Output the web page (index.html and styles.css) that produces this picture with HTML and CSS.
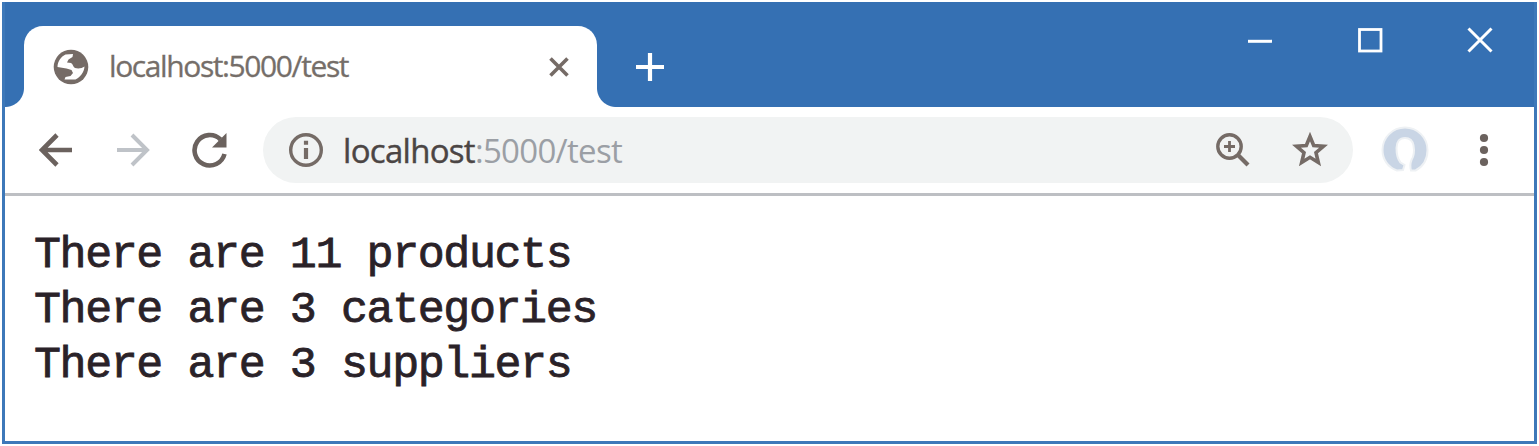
FILE: index.html
```html
<!DOCTYPE html>
<html lang="en">
<head>
<meta charset="utf-8">
<title>localhost:5000/test</title>
<link rel="stylesheet" href="styles.css">
</head>
<body>
<div class="window">
  <header class="titlebar">
    <span class="flare flare-left"></span>
    <div class="tab">
      <svg class="favicon" width="36" height="36" viewBox="0 0 36 36"><circle cx="18" cy="18" r="17.3" fill="#756b66"/><path d="M12.500 5.500L20 5l-.5 3-4 2.500-1.500 3 4 .5c2 1 2 4 4 5 3 1 7 .5 9.500-1.500-.5 6-4 10.500-9 13h-11l1-2.500 5-1 2.500-3-1.500-3-5-1.500-9-1.500C4.500 12.500 8 7.500 12.500 5.500z" fill="#fff"/></svg>
      <span class="tab-title">localhost:5000/test</span>
      <svg class="tab-close" width="20" height="20" viewBox="0 0 20 20"><path d="M1.500 1.500l17 17M18.500 1.500l-17 17" stroke="#756b66" stroke-width="3.600" fill="none"/></svg>
    </div>
    <span class="flare flare-right"></span>
    <svg class="new-tab" width="30" height="30" viewBox="0 0 30 30"><path d="M15 1v28M1 15h28" stroke="#fff" stroke-width="4.200"/></svg>
    <div class="controls">
      <svg width="26" height="26" viewBox="0 0 26 26"><path d="M1 14.300h24" stroke="#fff" stroke-width="3"/></svg>
      <svg width="26" height="26" viewBox="0 0 26 26"><rect x="2.500" y="2.500" width="21.500" height="21.500" stroke="#fff" stroke-width="2.800" fill="none"/></svg>
      <svg width="26" height="26" viewBox="0 0 26 26"><path d="M1.500 1.500l23 23M24.500 1.500l-23 23" stroke="#fff" stroke-width="3"/></svg>
    </div>
  </header>
  <nav class="toolbar">
    <svg class="back" width="34" height="34" viewBox="0 0 34 34"><path d="M33 17H3M18 2L3 17l15 15" stroke="#6b625e" stroke-width="4.600" fill="none"/></svg>
    <svg class="forward" width="34" height="34" viewBox="0 0 34 34"><path d="M1 17h30M16 2l15 15-15 15" stroke="#bfc3c8" stroke-width="4" fill="none"/></svg>
    <svg class="reload" width="36" height="36" viewBox="0 0 36 36"><path d="M32.500 22A15.200 15.200 0 1 1 28.500 7.500" stroke="#6b625e" stroke-width="4.600" fill="none"/><path d="M34.500 1v14.500H20z" fill="#6b625e"/></svg>
    <div class="address">
      <svg class="info" width="36" height="36" viewBox="0 0 36 36"><circle cx="18" cy="18" r="15.300" stroke="#756b66" stroke-width="3.400" fill="none"/><path d="M18 16v11M18 8.800v4" stroke="#756b66" stroke-width="4.200"/></svg>
      <span class="url"><span class="host">localhost</span><span class="path">:5000/test</span></span>
      <svg class="zoom" width="34" height="34" viewBox="0 0 34 34"><circle cx="13.500" cy="13.500" r="11.700" stroke="#756b66" stroke-width="3.400" fill="none"/><path d="M22 22l10 10" stroke="#756b66" stroke-width="4.200"/><path d="M13.500 8v11M8 13.500h11" stroke="#756b66" stroke-width="2.800"/></svg>
      <svg class="star" width="36" height="36" viewBox="0 0 36 36"><path d="M18 4.500l3.700 9 9.800.8-7.500 6.400 2.300 9.800-8.300-5.200-8.300 5.200 2.300-9.800-7.500-6.400 9.800-.8z" stroke="#756b66" stroke-width="3.600" fill="none"/></svg>
    </div>
    <svg class="avatar" width="50" height="50" viewBox="0 0 50 50"><path d="M17 45.500C8 42.500 2.500 34.500 2.500 25a22.500 22.500 0 0 1 45 0c0 9-4.500 16.500-12 20.500h-4.500c-1-4-1-7 .5-10.500 2.500-4 3-9 2-14.500-1-5.500-4-7.500-8.500-7.500-5.500 0-8.500 4-8.500 10 0 6 1 11 4 14.500l4 2.500-1.500 5z" fill="#c9d5e5" stroke="#eef1f4" stroke-width="2"/></svg>
    <svg class="menu" width="10" height="34" viewBox="0 0 10 34"><g fill="#6b625e"><circle cx="5" cy="5" r="4.100"/><circle cx="5" cy="17" r="4.100"/><circle cx="5" cy="29" r="4.100"/></g></svg>
  </nav>
  <main class="page">
    <pre class="output">There are 11 products
There are 3 categories
There are 3 suppliers</pre>
  </main>
</div>
</body>
</html>
```
FILE: styles.css
```css
* { box-sizing: border-box; }
body { margin: 0; background: #fff; }
.window {
  width: 1535px;
  height: 442px;
  margin: 2px 0 0 2px;
  border: 3px solid #3d78b9;
  border-top-width: 0;
  background: #fff;
}
.titlebar {
  display: flex;
  height: 105px;
  padding-top: 24px;
  background: #3570b3;
}
.flare { width: 19px; height: 19px; align-self: flex-end; }
.flare-left { background: radial-gradient(circle at 0 0, transparent 18.5px, #fff 19.5px); }
.flare-right { background: radial-gradient(circle at 100% 0, transparent 18.5px, #fff 19.5px); }
.tab {
  display: flex;
  align-items: center;
  width: 573px;
  padding: 0 28px 0 29px;
  border-radius: 19px 19px 0 0;
  background: #fff;
}
.favicon { flex: none; }
.tab-title {
  margin: 0 0 2px 20px;
  font: 30px/40px "Open Sans", "Noto Sans", sans-serif;
  letter-spacing: -1.4px;
  color: #756e69;
  white-space: nowrap;
  -webkit-text-stroke: 0.3px #756e69;
}
.tab-close { margin-left: auto; }
.new-tab { margin: 26px 0 0 19px; }
.controls { display: flex; gap: 84px; margin: 1px 41px 0 auto; }
.toolbar {
  display: flex;
  align-items: center;
  height: 89px;
  padding: 0 45px 0 34px;
  border-bottom: 3px solid #bdbfc3;
}
.forward { margin-left: 43px; }
.reload { margin-left: 42px; }
.address {
  display: flex;
  align-items: center;
  width: 1090px;
  height: 66px;
  margin-left: 35px;
  padding: 0 25px;
  border-radius: 33px;
  background: #f1f3f3;
}
.url {
  margin: 2px auto 0 19px;
  font: 33px/44px "Open Sans", "Noto Sans", sans-serif;
  letter-spacing: -0.7px;
  white-space: nowrap;
}
.host { color: #4b4544; -webkit-text-stroke: 0.4px #4b4544; }
.path { color: #9b9fa5; }
.star { margin-left: 42px; }
.avatar { margin-left: 27px; }
.menu { margin-left: 49px; }
.page { padding: 32px 29px 0; }
.output {
  margin: 0;
  font: 45px/55px "Liberation Mono", monospace;
  letter-spacing: -1.42px;
  color: #2a2228;
  -webkit-text-stroke: 0.8px #2a2228;
}
```
